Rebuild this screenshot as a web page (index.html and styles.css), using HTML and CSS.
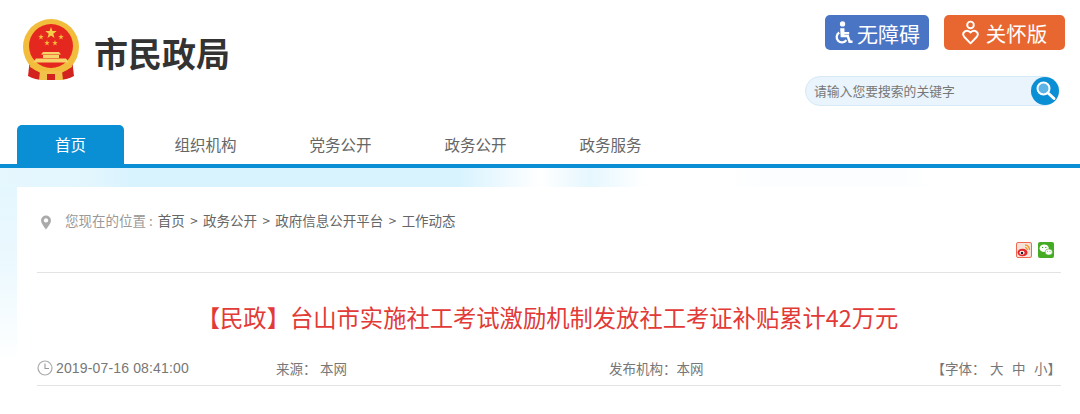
FILE: index.html
```html
<!DOCTYPE html>
<html lang="zh-CN">
<head>
    <meta charset="UTF-8">
    <meta name="viewport" content="width=device-width, initial-scale=1.0">
    <title>市民政局</title>
    <link rel="stylesheet" href="styles.css">
</head>
<body>

    <!-- Header -->
    <header class="site-header">
        <div class="brand">
            <svg class="emblem" viewBox="0 0 58 62" width="58" height="62">
                <path d="M8 40 L6 57 Q13 61 22 61 L26 50 Z" fill="#d2231f"/>
                <path d="M50 40 L52 57 Q45 61 36 61 L32 50 Z" fill="#d2231f"/>
                <circle cx="29" cy="28" r="28" fill="#f2bd3c"/>
                <circle cx="29" cy="27" r="22" fill="#e5281f"/>
                <polygon points="29,8 30.400,12.100 34.700,12.100 31.300,14.700 32.500,18.900 29,16.400 25.500,18.900 26.700,14.700 23.300,12.100 27.600,12.100" fill="#f6cf4a"/>
                <polygon points="19,15 19.700,17 21.800,17 20.100,18.300 20.700,20.400 19,19.200 17.300,20.400 17.900,18.300 16.200,17 18.300,17" fill="#f3b93a"/>
                <polygon points="39,15 39.700,17 41.800,17 40.100,18.300 40.700,20.400 39,19.200 37.300,20.400 37.900,18.300 36.200,17 38.300,17" fill="#f3b93a"/>
                <polygon points="25,21 25.700,23 27.800,23 26.100,24.300 26.700,26.400 25,25.200 23.300,26.400 23.900,24.300 22.200,23 24.300,23" fill="#f3b93a"/>
                <polygon points="33,21 33.700,23 35.800,23 34.100,24.300 34.700,26.400 33,25.200 31.300,26.400 31.900,24.300 30.200,23 32.300,23" fill="#f3b93a"/>
                <path d="M21 33 L19 35.500 H39 L37 33 Z M21 36 H37 V39 H21 Z M14 39.500 H44 L47 43.500 H11 Z" fill="#f7d469"/>
                <path d="M9 43 Q29 56 49 43 L50 48 Q29 62 8 48 Z" fill="#f2bd3c"/>
                <path d="M18 52 H40 L41 61 H17 Z" fill="#f2c14a"/>
                <path d="M25 55 H33 V61 H25 Z" fill="#d2231f"/>
            </svg>
            <span class="brand-name">市民政局</span>
        </div>
        <div class="header-tools">
            <div class="mode-buttons">
                <a class="mode-btn mode-blue" href="#">
                    <svg viewBox="0 0 20 24" width="19" height="23">
                        <circle cx="9" cy="3" r="2.800" fill="#fff"/>
                        <path d="M6.500 7.500 H11 V11.500 H16 V14 H11 V14.500 H15.500 L17.500 20.500 H19.500 V23 H15.500 L13.500 17 H7 Z" fill="#fff"/>
                        <path d="M5.500 12 A5.600 5.600 0 1 0 13 20" fill="none" stroke="#fff" stroke-width="2.400"/>
                    </svg>
                    <span>无障碍</span>
                </a>
                <a class="mode-btn mode-orange" href="#">
                    <svg viewBox="0 0 18 26" width="17" height="25">
                        <circle cx="9" cy="5" r="3.500" fill="none" stroke="#fff" stroke-width="2"/>
                        <path d="M9 24.500 L2.300 17.500 C-0.800 13 4.500 9 9 13 C13.500 9 18.800 13 15.700 17.500 Z" fill="none" stroke="#fff" stroke-width="2" stroke-linejoin="round"/>
                    </svg>
                    <span>关怀版</span>
                </a>
            </div>
            <form class="search-box">
                <input class="search-input" type="text" placeholder="请输入您要搜索的关键字">
                <button class="search-btn" type="button" aria-label="搜索">
                    <svg viewBox="0 0 28 28" width="28" height="28">
                        <circle cx="12.500" cy="11.500" r="6" fill="#5db4e6" stroke="#fff" stroke-width="2"/>
                        <path d="M17 16 L23 21.500" stroke="#fff" stroke-width="3" stroke-linecap="round"/>
                    </svg>
                </button>
            </form>
        </div>
    </header>

    <!-- Main navigation -->
    <nav class="main-nav">
        <a class="nav-item active" href="#">首页</a>
        <a class="nav-item" href="#">组织机构</a>
        <a class="nav-item" href="#">党务公开</a>
        <a class="nav-item" href="#">政务公开</a>
        <a class="nav-item" href="#">政务服务</a>
    </nav>

    <!-- Article -->
    <main class="page-bg">
        <div class="article">
            <div class="breadcrumb">
                <svg class="pin" viewBox="0 0 12 16" width="12" height="15">
                    <path d="M6 0.500 A5.300 5.300 0 0 1 11.300 5.800 C11.300 9 8 12.500 6 15.500 C4 12.500 0.700 9 0.700 5.800 A5.300 5.300 0 0 1 6 0.500 Z" fill="#aaa"/>
                    <circle cx="6" cy="5.800" r="2.300" fill="#fff"/>
                </svg>
                <span class="crumb-label">您现在的位置 :</span>
                <a href="#">首页</a><i>&gt;</i>
                <a href="#">政务公开</a><i>&gt;</i>
                <a href="#">政府信息公开平台</a><i>&gt;</i>
                <a href="#">工作动态</a>
            </div>

            <div class="share-row">
                <svg viewBox="0 0 16 16" width="16" height="16">
                    <rect x="0.500" y="0.500" width="15" height="15" rx="1.500" fill="#f6e2d8" stroke="#ee6a52"/>
                    <ellipse cx="6.500" cy="10.500" rx="5" ry="3.800" fill="#e0282c"/>
                    <ellipse cx="6" cy="10.800" rx="2.600" ry="2" fill="#fff"/>
                    <circle cx="6" cy="11" r="1.300" fill="#222"/>
                    <path d="M9 3 A4.500 4.500 0 0 1 13.500 8" fill="none" stroke="#f09a2c" stroke-width="1.400"/>
                    <path d="M9 5.500 A2.200 2.200 0 0 1 11.200 8" fill="none" stroke="#f09a2c" stroke-width="1.200"/>
                </svg>
                <svg viewBox="0 0 16 16" width="16" height="16">
                    <rect width="16" height="16" rx="2" fill="#46ab24"/>
                    <ellipse cx="6.200" cy="6.300" rx="4.600" ry="3.800" fill="#fff"/>
                    <ellipse cx="10.800" cy="10" rx="3.700" ry="3.100" fill="#fff" stroke="#46ab24" stroke-width="0.600"/>
                    <circle cx="4.600" cy="5.400" r="0.700" fill="#46ab24"/>
                    <circle cx="7.800" cy="5.400" r="0.700" fill="#46ab24"/>
                    <circle cx="9.600" cy="9.300" r="0.500" fill="#46ab24"/>
                    <circle cx="12" cy="9.300" r="0.500" fill="#46ab24"/>
                </svg>
            </div>

            <h1 class="article-title">【民政】台山市实施社工考试激励机制发放社工考证补贴累计42万元</h1>

            <div class="article-meta">
                <div class="meta-date">
                    <svg viewBox="0 0 16 16" width="16" height="16">
                        <circle cx="8" cy="8" r="7" fill="none" stroke="#aaa" stroke-width="1.200"/>
                        <path d="M8 3.500 V8.500 H12" fill="none" stroke="#999" stroke-width="1.100"/>
                    </svg>
                    <span>2019-07-16 08:41:00</span>
                </div>
                <div>来源&#xFF1A;<span class="meta-value">本网</span></div>
                <div>发布机构&#xFF1A;本网</div>
                <div class="font-size">【字体&#xFF1A;<a href="#">大</a><a href="#">中</a><a href="#">小</a>】</div>
            </div>
        </div>
    </main>

</body>
</html>
```

FILE: styles.css
```css
/* General body and layout styling */
html, body {
    height: 414px;
    overflow: hidden;
}

body {
    margin: 0;
    padding: 0;
    background-color: #fff;
    color: #666;
    font-family: "Noto Sans CJK SC", "Liberation Sans", sans-serif;
}

a {
    color: inherit;
    text-decoration: none;
}

/* Header */
.site-header {
    display: flex;
    justify-content: space-between;
    height: 125px;
    box-sizing: border-box;
    padding: 15px 15px 0 22px;
}

.brand {
    display: flex;
    align-items: center;
    height: 80px;
}

.emblem {
    flex: none;
    margin-bottom: 10px;
}

.brand-name {
    margin: -4px 0 0 14px;
    font-size: 34px;
    font-weight: 700;
    color: #333;
    line-height: 80px;
}

.header-tools {
    display: flex;
    flex-direction: column;
    align-items: flex-end;
}

.mode-buttons {
    display: flex;
    gap: 15px;
}

.mode-btn {
    display: flex;
    align-items: center;
    justify-content: center;
    gap: 4px;
    height: 35px;
    border-radius: 5px;
    color: #fff;
    font-size: 21px;
}

.mode-blue {
    width: 104px;
    background-color: #4a74c4;
}

.mode-orange {
    width: 121px;
    gap: 7px;
    background-color: #e86730;
    font-size: 20.5px;
}

/* Search */
.search-box {
    display: flex;
    align-items: center;
    position: relative;
    margin: 26px 6px 0 0;
    width: 254px;
    height: 30px;
    box-sizing: border-box;
    border: 1px solid #d6e9f6;
    border-radius: 15px;
    background-color: #e9f4fc;
}

.search-input {
    flex: 1;
    min-width: 0;
    padding: 0 0 2px 8px;
    border: none;
    outline: none;
    background: transparent;
    font-family: inherit;
    font-size: 12.8px;
    color: #777;
}

.search-input::placeholder {
    color: #777;
    opacity: 1;
}

.search-btn {
    position: absolute;
    top: 0;
    right: -1px;
    display: block;
    width: 28px;
    height: 28px;
    padding: 0;
    border: none;
    border-radius: 50%;
    background-color: #0a8ed4;
}

.search-btn svg {
    display: block;
}

/* Main navigation */
.main-nav {
    display: flex;
    gap: 28px;
    height: 39px;
    padding-left: 17px;
    border-bottom: 4px solid #0a8ed4;
}

.nav-item {
    width: 107px;
    height: 39px;
    line-height: 39px;
    text-align: center;
    font-size: 15.5px;
    color: #666;
}

.nav-item.active {
    background-color: #0a8ed4;
    border-radius: 5px 5px 0 0;
    color: #fff;
}

/* Tinted band behind the article */
.page-bg {
    padding: 19px 0 0 17px;
    background-image:
        linear-gradient(to right, #e6f7fe 0, #e3f6fe 90px, #d9f3fe 130px, #d9f3fe 460px, #f0faff 510px, #fff 540px, #e6f7fe 590px, #fff 645px, #fff 730px, #fbfdff 770px, #fbfdff 900px, #fff 930px),
        linear-gradient(to bottom, #e3f6fe 0, #ecf9fe 100px, #fff 195px);
    background-size: 100% 19px, 17px 100%;
    background-repeat: no-repeat;
}

.article {
    padding: 23px 19px 0 20px;
    background-color: #fff;
}

/* Breadcrumb */
.breadcrumb {
    display: flex;
    align-items: center;
    height: 20px;
    font-size: 13.5px;
    color: #666;
}

.pin {
    flex: none;
    margin: 4px 13px 0 3px;
}

.crumb-label {
    margin-right: 5px;
    color: #999;
}

.breadcrumb i {
    margin: 0 5.4px;
    font-style: normal;
}

/* Share icons */
.share-row {
    display: flex;
    justify-content: flex-end;
    gap: 6px;
    margin-top: 12px;
    padding: 0 7px 14px 0;
    border-bottom: 1px solid #e3e3e3;
}

.share-row svg {
    display: block;
}

/* Title */
.article-title {
    margin: 26px 0 0;
    padding-right: 3px;
    font-size: 23.3px;
    font-weight: 400;
    line-height: 36px;
    text-align: center;
    color: #e23a36;
}

/* Meta row */
.article-meta {
    display: grid;
    grid-template-columns: 239px 333px 1fr auto;
    align-items: center;
    height: 34px;
    margin-top: 16px;
    border-bottom: 1px solid #e3e3e3;
    font-size: 13.5px;
    color: #777;
}

.meta-date {
    display: flex;
    align-items: center;
    gap: 3px;
    font-family: "Liberation Sans", sans-serif;
    font-size: 14px;
    letter-spacing: 0.15px;
}

.meta-value {
    margin-left: 3.5px;
}

.font-size a {
    margin-left: 8.5px;
}

.font-size a:first-child {
    margin-left: 4.5px;
}
```
